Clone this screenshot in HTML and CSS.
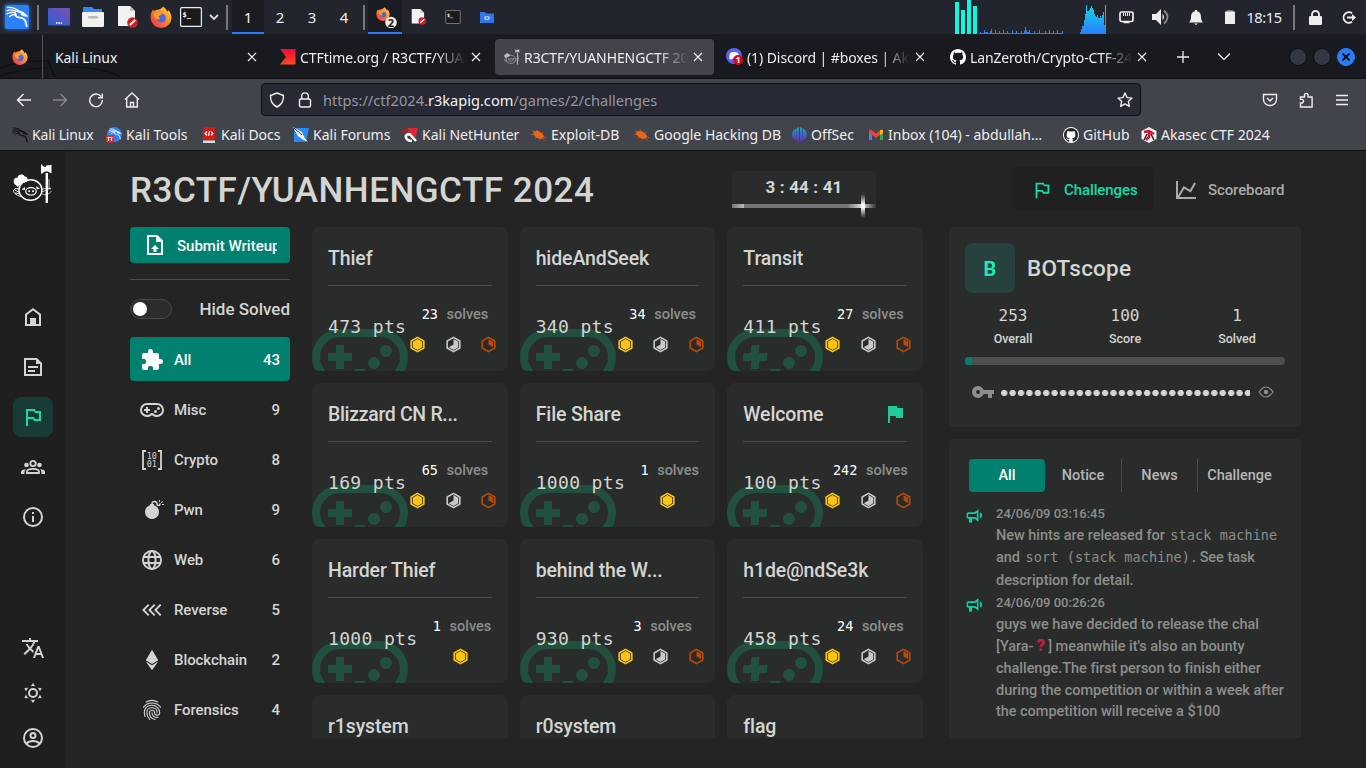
FILE: index.html
```html
<!DOCTYPE html>
<html lang="en">
<head>
<meta charset="utf-8">
<title>R3CTF/YUANHENGCTF 2024</title>
<link rel="stylesheet" href="styles.css">
</head>
<body>
<svg class="defs" width="0" height="0">
  <defs>
    <linearGradient id="foxg" x1="1" y1="0" x2="0" y2="1"><stop offset="0" stop-color="#ffe14a"/><stop offset=".45" stop-color="#ff8a26"/><stop offset="1" stop-color="#f0245c"/></linearGradient>
    <linearGradient id="bluev" x1="0" y1="0" x2="0" y2="1"><stop offset="0" stop-color="#10d8e4"/><stop offset="1" stop-color="#2a7dff"/></linearGradient>
    <linearGradient id="desk" x1="0" y1="1" x2="1" y2="0"><stop offset="0" stop-color="#2d5fd8"/><stop offset="1" stop-color="#7a4fb0"/></linearGradient>
    <linearGradient id="offs" x1="0" y1="0" x2="0" y2="1"><stop offset="0" stop-color="#14a8c0"/><stop offset="1" stop-color="#6a26d0"/></linearGradient>
    <linearGradient id="flagr" x1="0" y1="0" x2="0" y2="1"><stop offset="0" stop-color="#f4083c"/><stop offset="1" stop-color="#ff4a1c"/></linearGradient>
  </defs>
  <symbol id="fox" viewBox="0 0 22 22"><path fill="url(#foxg)" d="M13 0.500c3 2 3.500 3.500 4 5 1-.3 1.200-1 1.200-1.500 2 2 3.300 4.800 3.300 7.700A10.400 10.400 0 0 1 11 22 10.400 10.400 0 0 1 .6 11.500C.6 8 1.500 5.500 3.400 3.200c0 1 .3 1.700.6 2C5.200 4 6.500 3.800 7.500 3.800c2-.2 4.600-1.200 5.500-3.300z"/><circle cx="11.300" cy="12" r="4.600" fill="#4f66e0"/><path fill="#ffa52a" d="M4 8c2-1.600 6-1.500 8 0-1 1.400-3 1-3.600 2.600L10 13c-3 1-6-1-6-5z"/></symbol>
  <symbol id="dragon" viewBox="0 0 24 24"><g fill="none" stroke="currentColor" stroke-linecap="round"><path stroke-width="1.500" d="M2 1.500c6 0 10 1.500 13 5M1 5c4-1.500 7-1 11 .8M1 8.500c3-1.500 6-2 9-1.500M4 11.500c2-2 4-2.500 7-2.500"/><path stroke-width="2" d="M10 8c-1 4 4 4.500 7 5s5 4 5.500 9"/><path stroke-width="2.200" d="M13 6c4 0 6 1.500 9 4.500-2 0-3-.5-5-1.500"/></g></symbol>
  <symbol id="nodoc" viewBox="0 0 22 22"><path fill="#f2f2f2" d="M1 0h12l5 5v15H1z"/><path fill="#c4c4c4" d="M13 0l5 5h-5z"/><circle cx="15.500" cy="16.500" r="5.300" fill="#d01f26"/><path stroke="#fff" stroke-width="1.800" d="M12.800 19l5.400-5"/></symbol>
  <symbol id="term" viewBox="0 0 22 20"><rect x=".6" y=".6" width="20.800" height="18.800" rx="1" fill="#1b1b1b" stroke="currentColor" stroke-width="1.200"/><text x="2.500" y="9.500" font-size="7" font-weight="700" fill="#fff" font-family="DejaVu Sans Mono, monospace">$_</text></symbol>
  <symbol id="github" viewBox="0 0 16 16"><path fill="currentColor" d="M8 0C3.580 0 0 3.580 0 8c0 3.540 2.290 6.530 5.470 7.590.4.070.55-.17.55-.38 0-.19-.01-.82-.01-1.490-2.010.37-2.530-.49-2.690-.94-.09-.23-.48-.94-.82-1.130-.28-.15-.68-.52-.01-.53.63-.01 1.080.58 1.230.82.72 1.210 1.870.87 2.330.66.07-.52.28-.87.51-1.070-1.780-.2-3.640-.89-3.640-3.950 0-.87.31-1.590.82-2.150-.08-.2-.36-1.020.08-2.120 0 0 .67-.21 2.200.82.64-.18 1.320-.27 2-.27s1.360.09 2 .27c1.530-1.040 2.200-.82 2.200-.82.44 1.100.16 1.920.08 2.120.51.56.82 1.270.82 2.150 0 3.070-1.870 3.750-3.650 3.950.29.25.54.73.54 1.480 0 1.070-.01 1.930-.01 2.200 0 .21.15.46.55.38A8.010 8.010 0 0 0 16 8c0-4.420-3.580-8-8-8z"/></symbol>
  <symbol id="bug" viewBox="0 0 16 16"><g stroke="#f0641a" stroke-width=".7"><path d="M1 3.500l4 2.500M0 7l5 1M6 2.500l1 3M4 12l3-3M9 13l-1-4M15.500 11l-4-2M12 5l-2 2M14 13.500l-4-4"/></g><ellipse cx="7.500" cy="7.800" rx="5.600" ry="3.300" transform="rotate(28 7.500 7.800)" fill="#f0641a"/></symbol>
  <symbol id="x" viewBox="0 0 10 10"><path d="M1 1l8 8M9 1L1 9" stroke="currentColor" stroke-width="1.200" fill="none"/></symbol>
  <symbol id="pig" viewBox="0 0 40 40"><g fill="none" stroke="currentColor"><ellipse cx="17.500" cy="26" rx="11.500" ry="10.300" stroke-width="1.400"/><ellipse cx="18" cy="27.300" rx="5.300" ry="3.700" stroke-width="1.200"/><path stroke-width=".9" d="M6 25c-3-1-5.500 0-5.500 2s4 5 8 5.500M2 26l5 3M2 29l5 1"/><path stroke-width=".9" opacity=".75" d="M28 29c3 3 8 2 10.500-2M28 26c3-2 7-2 10-1M29 28l9-4M36 15v10"/><path stroke-width="2.400" d="M33.800 9v30"/></g><path fill="currentColor" d="M1.500 20c-2-3 0-7 3-6 0-4 6-4.500 7-1.500 3-.5 4 3 2.500 5.500-5 .5-7 2.500-9 5zM28 0l3.500 3h1.500V1.500L38.500 1v8.500L35 7.500h-3L28 10z"/><circle cx="16.200" cy="27.300" r="1" fill="currentColor"/><circle cx="20" cy="27.300" r="1" fill="currentColor"/><path fill="currentColor" d="M8.500 25.500l3.500-2.500v3zM23 22l4 2.500-3 1z"/></symbol>
  <symbol id="pad" viewBox="0 0 24 24"><path fill="currentColor" d="M6,9H8V11H10V13H8V15H6V13H4V11H6V9M18.500,9A1.500,1.500 0 0,1 20,10.500A1.500,1.500 0 0,1 18.500,12A1.500,1.500 0 0,1 17,10.500A1.500,1.500 0 0,1 18.500,9M15.500,12A1.500,1.500 0 0,1 17,13.500A1.500,1.500 0 0,1 15.500,15A1.500,1.500 0 0,1 14,13.500A1.500,1.500 0 0,1 15.500,12M17,5A7,7 0 0,1 24,12A7,7 0 0,1 17,19C15.040,19 13.270,18.200 12,16.900C10.730,18.200 8.960,19 7,19A7,7 0 0,1 0,12A7,7 0 0,1 7,5H17M7,7A5,5 0 0,0 2,12A5,5 0 0,0 7,17C8.640,17 10.090,16.210 11,15H13C13.910,16.210 15.360,17 17,17A5,5 0 0,0 22,12A5,5 0 0,0 17,7H7Z"/></symbol>
  <symbol id="flago" viewBox="0 0 24 24"><path fill="currentColor" d="M14.500,6L14,4H5V21H7V14H12L13,16H20V6H14.500M18,14H14L13,12H7V6H13L14,8H18V14Z"/></symbol>
  <symbol id="horn" viewBox="0 0 24 24"><path fill="currentColor" d="M12,8H4A2,2 0 0,0 2,10V14A2,2 0 0,0 4,16H5V20A1,1 0 0,0 6,21H8A1,1 0 0,0 9,20V16H12L17,20V4L12,8M15,15.600L13,14H4V10H13L15,8.400V15.600M21.500,12C21.500,13.710 20.540,15.260 19,16V8C20.530,8.750 21.500,10.300 21.500,12Z"/></symbol>
  <symbol id="hexo" viewBox="0 0 24 24"><path fill="none" stroke="currentColor" stroke-width="2" stroke-linejoin="round" d="M12 3l8 4.500v9L12 21l-8-4.500v-9z"/></symbol>
  <symbol id="hex6" viewBox="0 0 24 24"><use href="#hexo"/><path fill="currentColor" d="M12 5.200l6 3.400v6.800l-6 3.400-6-3.400V8.600z"/></symbol>
  <symbol id="hex4" viewBox="0 0 24 24"><use href="#hexo"/><path fill="currentColor" d="M12 5.200l6 3.400v6.800l-6 3.400-6-3.400 6-3.400z"/></symbol>
  <symbol id="hex2" viewBox="0 0 24 24"><use href="#hexo"/><path fill="currentColor" d="M12 5.200l6 3.400v6.800l-6-3.400z"/></symbol>
</svg>

<header class="panel">
  <span><svg class="kali" width="26" height="26" viewBox="0 0 26 26"><rect x="1" y="1" width="24" height="24" rx="2" fill="#2a80f5"/><use href="#dragon" x="2" y="2" width="22" height="22" color="#fff"/></svg></span>
  <i class="sep"></i>
  <span><svg width="22" height="18" viewBox="0 0 22 18"><rect width="22" height="17.500" rx="1" fill="url(#desk)"/><path stroke="#fff" stroke-width="1.500" stroke-dasharray="1.500 .8" d="M8 15h6.500"/></svg></span>
  <span><svg width="22" height="20" viewBox="0 0 22 20"><path fill="#3584f0" d="M1 0h9l2 2h8v5H1z"/><rect y="5" width="22" height="15" rx="1" fill="#f1f1f1"/><rect x="6" y="9" width="10" height="2.500" rx="1" fill="#bbb"/></svg></span>
  <span><svg width="22" height="22"><use href="#nodoc"/></svg></span>
  <span><svg width="22" height="22"><use href="#fox"/></svg></span>
  <span><svg width="22" height="20" class="w"><use href="#term"/></svg></span>
  <span><svg width="10" height="6" viewBox="0 0 10 6"><path d="M1 1l4 4 4-4" fill="none" stroke="#ddd" stroke-width="1.800"/></svg></span>
  <i class="sep"></i>
  <span class="ws on">1</span><span class="ws">2</span><span class="ws">3</span><span class="ws">4</span>
  <i class="sep"></i>
  <span class="task on"><svg width="21" height="24" viewBox="0 0 21 24"><use href="#fox" x="0" y="3" width="14" height="14"/><circle cx="15" cy="18.500" r="5.800" fill="#eee"/><text x="15" y="22.500" text-anchor="middle" font-size="11" font-weight="700" fill="#222" font-family="Noto Sans, sans-serif">2</text></svg></span>
  <span><svg width="16" height="16"><use href="#nodoc"/></svg></span>
  <span><svg width="16" height="14" class="g"><use href="#term"/></svg></span>
  <span><svg width="14" height="11" viewBox="0 0 14 11"><path fill="#2f78e8" d="M0 0h5l1 1.500h8V11H0z"/><ellipse cx="7" cy="6" rx="3" ry="2" fill="#a9caff"/><circle cx="7" cy="6" r="1" fill="#2f78e8"/></svg></span>
  <span class="spacer"></span>
  <svg class="graph" width="154" height="34" viewBox="0 0 154 34"><path fill="#06fbe0" d="M2 2h4v32H2zM8 10h4v24H8zM14 0h4v34h-4zM20 6h4v28h-4z"/><path fill="#2a7dff" d="M26 34v-1h1v-1h1v1h3v-3h1v2h3v1h2v-2h1v-2h1v4h3v-3h1v3h3v-2h1v2h3v-3h1v3h3v-2h1v2h4v-3h1v3h3v-2h1v2h4v-2h1v2h2v-2h1v-4h1v3h1v2h2v-2h1v3h4v-2h1v2h4v-3h1v3h5v-2h1v2h3v-3h1v3h3v-2h1v2h3v-3h1v3h4v-2h1v3z"/><path fill="url(#bluev)" d="M127 34v-2h1v-3h1v-3h2v-6h1v-6h1v-9h1v6h2v-1h1v-2h1v-2h1v2h1v2h1v4h1v2h1v1h1v-2h1v3h2v-2h1v2h1v-3h1v-3h1v13h1V5h1v29z"/></svg>
  <span><svg width="15" height="13" viewBox="0 0 15 13"><rect x="1" y="1" width="13" height="9.500" rx="1.500" fill="none" stroke="#eee" stroke-width="1.700"/><path stroke="#eee" d="M4.500 2v3M6.500 2v3M8.500 2v3M10.500 2v3"/><path stroke="#eee" stroke-width="1.500" d="M4.500 11.500h6"/></svg></span>
  <span><svg width="18" height="16" viewBox="0 0 18 16"><path fill="#eee" d="M0 5h4l5-5v16l-5-5H0zM10.500 4.500q3 3.500 0 7z"/><path fill="none" stroke="#888" stroke-width="1.800" d="M12 1.500q7 6.500 0 13"/></svg></span>
  <span><svg width="14" height="15" viewBox="0 0 14 15"><path fill="#eee" d="M7 0c1 0 1.300.7 1.300 1.200C11 2 12 4 12 7c0 3 .8 4 2 5.500H0C1.200 11 2 10 2 7c0-3 1-5 3.700-5.800C5.700.7 6 0 7 0zM5 13.500h4L7 15z"/></svg></span>
  <span><svg width="10" height="14" viewBox="0 0 10 14"><path fill="#777" d="M2 0h6v2H2z"/><path fill="#eee" d="M0 1.500h10V14H0z"/></svg></span>
  <span class="clock">18:15</span>
  <i class="sep"></i>
  <span><svg width="13" height="15" viewBox="0 0 13 15"><rect y="6" width="13" height="9" rx="1" fill="#eee"/><path fill="none" stroke="#eee" stroke-width="1.900" d="M3 7V4.500a3.500 3.500 0 0 1 7 0V7"/></svg></span>
  <span class="out"><svg width="14" height="13" viewBox="0 0 14 13"><path fill="none" stroke="#eee" stroke-width="1.800" d="M10 2.200A5.300 5.300 0 1 0 10 10.800"/><path fill="#eee" d="M5 5.500h5V3l4 3.500L10 10V7.500H5z"/></svg></span>
</header>

<nav class="tabs">
  <svg class="wall" width="125" height="20" viewBox="0 0 125 20"><path fill="none" stroke="#0f1013" stroke-width="1.500" d="M0 10Q20 2 48 3L55 19M0 18Q20 11 48 10M70 9Q95 8 120 18"/></svg>
  <span class="pin"><svg width="16" height="16"><use href="#fox"/></svg></span>
  <div class="tab plain"><b>Kali Linux</b><svg width="10" height="10"><use href="#x"/></svg></div>
  <div class="tab ctf"><svg width="16" height="16" viewBox="0 0 16 16"><path fill="url(#flagr)" d="M0 0h15.500v15.500H0L6 8z"/></svg><b>CTFtime.org / R3CTF/YUAN</b><svg width="10" height="10"><use href="#x"/></svg></div>
  <div class="tab on"><svg width="16" height="16" color="#bbb"><use href="#pig"/></svg><b>R3CTF/YUANHENGCTF 20</b><svg width="10" height="10"><use href="#x"/></svg></div>
  <div class="tab"><svg width="17" height="17" viewBox="0 0 17 17"><circle cx="8" cy="8" r="8" fill="#5865f2"/><path fill="#fff" d="M4 5q4-2 8 0 1.500 3 1 6l-2 .5-1-1H6.500l-1 1-2-.5q-.5-3 .5-6z"/><circle cx="12" cy="12" r="5" fill="#e2001a"/><text x="12" y="15.300" text-anchor="middle" font-size="9" font-weight="700" fill="#fff" font-family="Noto Sans, sans-serif">1</text></svg><b>(1) Discord | #boxes | Akas</b><svg width="10" height="10"><use href="#x"/></svg></div>
  <div class="tab hub"><svg width="16" height="16" color="#fff"><use href="#github"/></svg><b>LanZeroth/Crypto-CTF-24</b><svg width="10" height="10"><use href="#x"/></svg></div>
  <span class="plus"><svg width="12" height="12" viewBox="0 0 12 12"><path stroke="#eee" stroke-width="1.300" d="M6 0v12M0 6h12"/></svg></span>
  <span class="more"><svg width="12" height="7" viewBox="0 0 12 7"><path fill="none" stroke="#eee" stroke-width="1.300" d="M0 .5l6 6 6-6"/></svg></span>
  <span class="wm"><i></i><i></i><i class="close"><svg width="8" height="8" viewBox="0 0 8 8"><path stroke="#111" stroke-width="2" d="M.5.5l7 7M7.500.5l-7 7"/></svg></i></span>
</nav>

<div class="toolbar">
  <span><svg width="16" height="16" viewBox="0 0 16 16"><path d="M15 8H2M7.500 2L1.500 8l6 6"/></svg></span>
  <span class="dim"><svg width="16" height="16" viewBox="0 0 16 16"><path d="M1 8h13M8.500 2l6 6-6 6"/></svg></span>
  <span><svg width="16" height="16" viewBox="0 0 16 16"><path d="M13 4.500A6.300 6.300 0 1 0 14.300 8M14.300 1.500v4.300H10"/></svg></span>
  <span><svg width="16" height="16" viewBox="0 0 16 16"><path d="M1 7.500L8 1l7 6.500M2.700 6.500V15h10.600V6.500M6.500 15v-4.500h3V15"/></svg></span>
  <div class="url">
    <svg width="16" height="16" viewBox="0 0 16 16"><path stroke-linejoin="round" d="M8 1l6.500 2.500c.3 5-1.500 9-6.500 11.500C3 12.500 1.200 8.500 1.500 3.500z"/></svg>
    <svg width="14" height="16" viewBox="0 0 14 16"><rect x="1.500" y="7" width="11" height="8" rx="1.500"/><path d="M3.700 7V4.200a3.300 3.300 0 0 1 6.600 0V7"/></svg>
    <p>https://ctf2024.<em>r3kapig.com</em>/games/2/challenges</p>
    <svg width="16" height="16" viewBox="0 0 16 16"><path stroke-linejoin="round" d="M8 1l2.100 4.600 4.900.5-3.700 3.300 1.100 5L8 11.900l-4.400 2.500 1.100-5L1 6.100l4.900-.5z"/></svg>
  </div>
  <span><svg width="16" height="16" viewBox="0 0 16 16"><path d="M1.500 2.500h13v5a6.500 6 0 0 1-13 0zM5 6l3 3 3-3"/></svg></span>
  <span><svg width="16" height="16" viewBox="0 0 16 16"><path d="M2.500 15v-4h1.200a1.800 1.800 0 0 0 0-3.600H2.500V5h4V3.200a1.800 1.800 0 0 1 3.600 0V5h4v10z"/></svg></span>
  <span><svg width="14" height="12" viewBox="0 0 14 12"><path d="M1 1.500h12M1 6h12M1 10.500h12"/></svg></span>
</div>

<div class="marks">
  <a class="kl"><svg width="16" height="16" color="#111"><use href="#dragon"/></svg>Kali Linux</a>
  <a><svg width="16" height="16" viewBox="0 0 16 16"><circle cx="8.500" cy="7.500" r="7.500" fill="#2f80f0"/><use href="#dragon" x="3" y="1" width="12" height="12" color="#fff"/><rect y="8" width="8" height="7.500" rx="1.500" fill="#e23030"/><path stroke="#fff" d="M2.500 10v4M5.500 10v4M1.500 10.500h5"/></svg>Kali Tools</a>
  <a><svg width="15" height="16" viewBox="0 0 15 16"><path fill="#d41919" d="M1 0h12v13H1z"/><path fill="#ddd" d="M1 13.500h12V16H1z"/><path fill="none" stroke="#fff" stroke-width="1.200" d="M5 4.500L3.200 6.500 5 8.500M9 4.500l1.800 2L9 8.500M7.500 4l-1 5"/></svg>Kali Docs</a>
  <a><svg width="16" height="16" viewBox="0 0 16 16"><path fill="#2b8af8" d="M1 1h15l-3 14H1z"/><path fill="#fff" d="M0 0l9 5 2 5 4 5-6-3-4-3z"/><path stroke="#222" d="M1 1l8 7"/></svg>Kali Forums</a>
  <a><svg width="16" height="16" viewBox="0 0 16 16"><path fill="#e02434" d="M5 1h11l-3 11-4-5z"/><path fill="none" stroke="#fff" stroke-width="2.500" d="M14 14L8.500 8c-2-2-5.500 0-4.500 2.500S7 14 10 14"/><path stroke="#c01622" stroke-width="3" d="M0 5l5-2"/></svg>Kali NetHunter</a>
  <a><svg width="16" height="16"><use href="#bug"/></svg>Exploit-DB</a>
  <a><svg width="16" height="16"><use href="#bug"/></svg>Google Hacking DB</a>
  <a><svg width="15" height="15" viewBox="0 0 15 15"><path fill="url(#offs)" d="M7 0v15L5 14V1zM8 0v15l2-1V1zM4.500 1.200v12.600Q0 11.500 0 7.500t4.500-6.300zM10.500 1.200v12.600Q15 11.500 15 7.500t-4.500-6.300z"/></svg>OffSec</a>
  <a><svg width="16" height="16" viewBox="0 0 16 16"><path fill="#4285f4" d="M1 4h3v9H1z"/><path fill="#34a853" d="M12 4h3v9h-3z"/><path fill="#ea4335" d="M1 3l2-.5 5 4 5-4 2 .5v2.500L8 11 1 5.500z"/><path fill="#fbbc04" d="M12 3.500l2-1 1 1.500v2l-3 2z"/></svg>Inbox (104) - abdullah…</a>
  <a><svg width="16" height="16" viewBox="0 0 16 16"><circle cx="8" cy="8" r="8" fill="#fff"/><use href="#github" x="1" y="1" width="14" height="14" color="#22252b"/></svg>GitHub</a>
  <a><svg width="16" height="16" viewBox="0 0 16 16"><path fill="#f4f4f4" d="M8 0l7.500 4v8L8 16 .5 12V4z"/><path fill="none" stroke="#d8102c" stroke-width="2.500" d="M3 5l5-1 5 3M8 4v6l-3 3"/><path stroke="#222" stroke-width="1.500" d="M3 13l3-6M13 13l-3-6"/></svg>Akasec CTF 2024</a>
</div>

<div class="app">
  <aside class="rail">
    <svg class="logo" width="40" height="40"><use href="#pig"/></svg>
    <div class="group top">
      <i><svg viewBox="0 0 24 24"><path fill="none" stroke="currentColor" stroke-width="2" d="M5 20V9.500L12 4.200 19 9.500V20z"/><path fill="currentColor" d="M9 13h6v8H9z"/></svg></i>
      <i><svg viewBox="0 0 24 24"><path fill="none" stroke="currentColor" stroke-width="2" d="M4 4h11.500L20 8.500V20H4zM7 12h10M7 16h7"/><path fill="currentColor" d="M15 4l5 5h-5z"/></svg></i>
      <i class="on"><svg><use href="#flago"/></svg></i>
      <i><svg viewBox="0 0 24 24"><g fill="none" stroke="currentColor" stroke-width="1.800"><circle cx="12" cy="8.500" r="2.700"/><path d="M6 18v-1.500c0-3.500 12-3.500 12 0V18z"/></g><g fill="currentColor"><circle cx="5.500" cy="10" r="2.300"/><circle cx="18.500" cy="10" r="2.300"/><path d="M0 19v-2c0-1.500 2-2.700 5-3-1.200 1-1.500 2-1.500 5zM24 19v-2c0-1.500-2-2.700-5-3 1.200 1 1.500 2 1.500 5z"/></g></svg></i>
      <i><svg viewBox="0 0 24 24"><circle cx="12" cy="12" r="9" fill="none" stroke="currentColor" stroke-width="2"/><path fill="currentColor" d="M11 7h2v2h-2zM11 11h2v6h-2z"/></svg></i>
    </div>
    <div class="group bottom">
      <i><svg viewBox="0 0 24 24"><path fill="currentColor" d="M12.870,15.070L10.330,12.560L10.360,12.530C12.100,10.590 13.340,8.360 14.070,6H17V4H10V2H8V4H1V6H12.170C11.500,7.920 10.440,9.750 9,11.350C8.070,10.320 7.300,9.190 6.690,8H4.690C5.420,9.630 6.420,11.170 7.670,12.560L2.580,17.580L4,19L9,14L12.110,17.110L12.870,15.070M18.500,10H16.500L12,22H14L15.120,19H19.870L21,22H23L18.500,10M15.880,17L17.500,12.670L19.120,17H15.880Z"/></svg></i>
      <i><svg viewBox="0 0 24 24"><circle cx="12" cy="12" r="4" fill="none" stroke="currentColor" stroke-width="2"/><path fill="currentColor" d="M12,2L14.390,5.420C13,4.900 11,4.900 9.610,5.420L12,2M3.340,7L7.500,6.650C6.300,7.600 5.400,9.200 5.110,10.790L3.340,7M3.360,17L5.120,13.230C5.400,14.900 6.300,16.400 7.500,17.370L3.360,17M20.650,7L18.880,10.790C18.600,9.200 17.700,7.600 16.500,6.640L20.650,7M20.640,17L16.500,17.360C17.700,16.400 18.600,14.800 18.870,13.210L20.640,17M12,22L9.590,18.560C11,19.100 13,19.100 14.370,18.560L12,22Z"/></svg></i>
      <i><svg viewBox="0 0 24 24"><g fill="none" stroke="currentColor" stroke-width="2"><circle cx="12" cy="12" r="9"/><circle cx="12" cy="9.500" r="2.500"/><path d="M5.500 17.500c3-3.300 10-3.300 13 0"/></g></svg></i>
    </div>
  </aside>

  <main class="content">
    <div class="head">
      <h1>R3CTF/YUANHENGCTF 2024</h1>
      <div class="timer"><span>3 : 44 : 41</span><i class="bar"></i><i class="spark"></i></div>
      <div class="views">
        <a class="on"><svg width="22" height="22"><use href="#flago"/></svg>Challenges</a>
        <a><svg width="24" height="24" viewBox="0 0 24 24"><path fill="currentColor" d="M16,11.780L20.240,4.450L21.970,5.450L16.740,14.500L10.230,10.750L5.460,19H22V21H2V3H4V17.540L9.500,8L16,11.780Z"/></svg>Scoreboard</a>
      </div>
    </div>

    <section class="cats">
      <button class="submit"><svg width="24" height="24" viewBox="0 0 24 24"><path fill="none" stroke="#fff" stroke-width="2" d="M5 3h9l5 5v13H5z"/><path fill="#fff" d="M13 3l6 6h-6zM12 12l4 4h-2.500v3h-3v-3H8z"/></svg><span>Submit Writeup</span></button>
      <hr>
      <div class="hide"><i></i><span>Hide Solved</span></div>
      <ul>
        <li class="on"><svg viewBox="0 0 24 24"><path fill="currentColor" d="M20.500,11H19V7C19,5.890 18.100,5 17,5H13V3.500A2.500,2.500 0 0,0 10.500,1A2.500,2.500 0 0,0 8,3.500V5H4A2,2 0 0,0 2,7V10.800H3.500C5,10.800 6.200,12 6.200,13.500C6.200,15 5,16.200 3.500,16.200H2V20A2,2 0 0,0 4,22H7.800V20.500C7.800,19 9,17.800 10.500,17.800C12,17.800 13.200,19 13.200,20.500V22H17A2,2 0 0,0 19,20V16H20.500A2.500,2.500 0 0,0 23,13.500A2.500,2.500 0 0,0 20.500,11Z"/></svg><span>All</span><b>43</b></li>
        <li><svg><use href="#pad"/></svg><span>Misc</span><b>9</b></li>
        <li><svg viewBox="0 0 24 24"><path fill="none" stroke="currentColor" stroke-width="1.800" d="M6 3H3v18h3M18 3h3v18h-3"/><g fill="currentColor" font-size="8.500" font-family="DejaVu Sans Mono, monospace"><text x="6.800" y="11">10</text><text x="6.800" y="19">01</text></g></svg><span>Crypto</span><b>8</b></li>
        <li><svg viewBox="0 0 24 24"><path fill="currentColor" d="M11.250,6A3.250,3.250 0 0,1 14.500,2.750A3.250,3.250 0 0,1 17.750,6C17.750,6.420 18.080,6.750 18.500,6.750C18.920,6.750 19.250,6.420 19.250,6V5.250H20.750V6A2.250,2.250 0 0,1 18.500,8.250A2.250,2.250 0 0,1 16.250,6A1.750,1.750 0 0,0 14.500,4.250A1.750,1.750 0 0,0 12.750,6H14V7.290C16.890,8.150 19,10.830 19,14A7,7 0 0,1 12,21A7,7 0 0,1 5,14C5,10.830 7.110,8.150 10,7.290V6H11.250M22,6H24V7H22V6M19,4V2H20V4H19M20.910,4.380L22.330,2.960L23.040,3.670L21.620,5.090L20.910,4.380Z"/></svg><span>Pwn</span><b>9</b></li>
        <li><svg viewBox="0 0 24 24"><g fill="none" stroke="currentColor" stroke-width="2"><circle cx="12" cy="12" r="9"/><ellipse cx="12" cy="12" rx="3.600" ry="9"/><path d="M3.800 9h16.400M3.800 15h16.400"/></g></svg><span>Web</span><b>6</b></li>
        <li><svg viewBox="0 0 24 24"><path fill="none" stroke="currentColor" stroke-width="1.900" d="M8.700 6.700L3.400 12l5.300 5.300M14.700 6.700L9.400 12l5.300 5.300M20.700 6.700L15.400 12l5.300 5.300"/></svg><span>Reverse</span><b>5</b></li>
        <li><svg viewBox="0 0 24 24"><path fill="currentColor" d="M12,1.750L5.750,12.250L12,16L18.250,12.250L12,1.750M5.750,13.500L12,22.250L18.250,13.500L12,17.250L5.750,13.500Z"/></svg><span>Blockchain</span><b>2</b></li>
        <li><svg viewBox="0 0 24 24"><path fill="none" stroke="currentColor" stroke-width="1.100" stroke-linecap="round" d="M6.200 4c3.600-2 8-2 11.600 0M3.500 9.200c4.200-5.600 12.800-5.600 17 0M5 18.500c-2-6 .5-11.200 7-11.200 4.500 0 7.700 3.500 7.700 7.400 0 3.200-5.100 3.200-5.100 0 0-3.300-5.200-3.300-5.200 0 0 3.400 2.300 6 5.600 6.800M9.700 21.300c-2-2-2.900-4-2.900-6.600 0-6.600 10.400-6.600 10.400 0M12 14.700c0 3.300 2.600 5.200 6 4.600"/></svg><span>Forensics</span><b>4</b></li>
      </ul>
    </section>

    <section class="cards">
      <article><h2>Thief</h2><svg class="bgi"><use href="#pad"/></svg><p>473 pts</p><div class="s"><span><b>23</b> solves</span><div><svg class="h6"><use href="#hex6"/></svg><svg class="h4"><use href="#hex4"/></svg><svg class="h2"><use href="#hex2"/></svg></div></div></article>
      <article><h2>hideAndSeek</h2><svg class="bgi"><use href="#pad"/></svg><p>340 pts</p><div class="s"><span><b>34</b> solves</span><div><svg class="h6"><use href="#hex6"/></svg><svg class="h4"><use href="#hex4"/></svg><svg class="h2"><use href="#hex2"/></svg></div></div></article>
      <article><h2>Transit</h2><svg class="bgi"><use href="#pad"/></svg><p>411 pts</p><div class="s"><span><b>27</b> solves</span><div><svg class="h6"><use href="#hex6"/></svg><svg class="h4"><use href="#hex4"/></svg><svg class="h2"><use href="#hex2"/></svg></div></div></article>
      <article><h2 class="narrow">Blizzard CN R...</h2><svg class="bgi"><use href="#pad"/></svg><p>169 pts</p><div class="s"><span><b>65</b> solves</span><div><svg class="h6"><use href="#hex6"/></svg><svg class="h4"><use href="#hex4"/></svg><svg class="h2"><use href="#hex2"/></svg></div></div></article>
      <article><h2>File Share</h2><svg class="bgi"><use href="#pad"/></svg><p>1000 pts</p><div class="s one"><span><b>1</b> solves</span><div><svg class="h6"><use href="#hex6"/></svg></div></div></article>
      <article><h2>Welcome<svg class="solved" width="24" height="24" viewBox="0 0 24 24"><path fill="#22c99a" d="M14.400,6L14,4H5V21H7V14H12.600L13,16H20V6H14.400Z"/></svg></h2><svg class="bgi"><use href="#pad"/></svg><p>100 pts</p><div class="s"><span><b>242</b> solves</span><div><svg class="h6"><use href="#hex6"/></svg><svg class="h4"><use href="#hex4"/></svg><svg class="h2"><use href="#hex2"/></svg></div></div></article>
      <article><h2>Harder Thief</h2><svg class="bgi"><use href="#pad"/></svg><p>1000 pts</p><div class="s one"><span><b>1</b> solves</span><div><svg class="h6"><use href="#hex6"/></svg></div></div></article>
      <article><h2>behind the W...</h2><svg class="bgi"><use href="#pad"/></svg><p>930 pts</p><div class="s"><span><b>3</b> solves</span><div><svg class="h6"><use href="#hex6"/></svg><svg class="h4"><use href="#hex4"/></svg><svg class="h2"><use href="#hex2"/></svg></div></div></article>
      <article><h2>h1de@ndSe3k</h2><svg class="bgi"><use href="#pad"/></svg><p>458 pts</p><div class="s"><span><b>24</b> solves</span><div><svg class="h6"><use href="#hex6"/></svg><svg class="h4"><use href="#hex4"/></svg><svg class="h2"><use href="#hex2"/></svg></div></div></article>
      <article><h2>r1system</h2></article>
      <article><h2>r0system</h2></article>
      <article><h2>flag</h2></article>
    </section>

    <section class="side">
      <div class="team">
        <div class="who"><i>B</i><span>BOTscope</span></div>
        <div class="stats"><div><b>253</b>Overall</div><div><b>100</b>Score</div><div><b>1</b>Solved</div></div>
        <div class="prog"><i></i></div>
        <div class="token"><svg width="24" height="24" viewBox="0 0 24 24"><path fill="currentColor" d="M7,14A2,2 0 0,1 5,12A2,2 0 0,1 7,10A2,2 0 0,1 9,12A2,2 0 0,1 7,14M12.650,10C11.830,7.670 9.610,6 7,6A6,6 0 0,0 1,12A6,6 0 0,0 7,18C9.610,18 11.830,16.330 12.650,14H17V18H21V14H23V10H12.650Z"/></svg><i></i><svg width="16" height="12" viewBox="0 0 16 12"><path fill="none" stroke="currentColor" stroke-width="1.200" d="M1 6q7-10 14 0-7 10-14 0z"/><circle cx="8" cy="6" r="2.200" fill="currentColor"/></svg></div>
      </div>
      <div class="news">
        <div class="seg"><a class="on">All</a><a>Notice</a><a class="l">News</a><a class="l">Challenge</a></div>
        <div class="note"><svg width="19" height="19"><use href="#horn"/></svg><div><time>24/06/09 03:16:45</time><p>New hints are released for <code>stack machine</code><br>and <code>sort (stack machine)</code>. See task<br>description for detail.</p></div></div>
        <div class="note second"><svg width="19" height="19"><use href="#horn"/></svg><div><time>24/06/09 00:26:26</time><p>guys we have decided to release the chal<br>[Yara-<em>?</em>] meanwhile it's also an bounty<br>challenge.The first person to finish either<br>during the competition or within a week after<br>the competition will receive a $100</p></div></div>
      </div>
    </section>
  </main>
</div>
</body>
</html>
```
FILE: styles.css
```css
* { box-sizing: border-box; }
body { margin: 0; width: 1366px; height: 768px; overflow: hidden; background: #242424; font-family: "Noto Sans", sans-serif; color: #eee; }
svg { display: block; flex: none; }
i, em { font-style: normal; }
h1, h2, p, ul { margin: 0; padding: 0; }
.defs { position: absolute; }

/* desktop panel */
.panel { height: 35px; background: #23252e; border-bottom: 1px solid #1b1c22; display: grid; align-items: center;
  grid-template-columns: 34px 7px 35px 34px 36px 30px 30px 16px 10px 32px 32px 32px 32px 8px 34px 34px 34px 34px 449px 154px 38px 32px 38px 30px 38px 21px 22px 40px; }
.panel > span { display: flex; justify-content: center; align-items: center; height: 34px; }
.panel .sep { width: 2px; height: 25px; background: #77787c; justify-self: center; }
.kali { filter: drop-shadow(0 0 2px #2a80f5); }
.w { color: #eee; }
.g { color: #888; }
.ws { font-size: 15px; }
.panel .on { background: #1b1c22; border-bottom: 2px solid #2a7dff; }
.panel .ws.on { padding-top: 2px; }
.panel .task { padding-left: 3px; }
.panel .out { padding-left: 6px; }
.clock { font-size: 14.500px; letter-spacing: -.4px; }

/* browser tabs */
.tabs { position: relative; height: 44px; background: #191a1f; border-bottom: 1px solid #0f1013; display: flex; align-items: center; font-size: 14px; }
.wall { position: absolute; left: 0; bottom: 0; }
.pin { width: 43px; height: 44px; padding: 14px 0 0 12px; border-right: 1px solid #55565b; position: relative; }
.tab { width: 219px; margin-right: 3px; height: 36px; border-radius: 4px; display: flex; align-items: center; padding: 0 11px 0 9px; gap: 4px; }
.tab.plain { width: 225px; padding-left: 12px; margin-right: 5px; }
.tab.ctf { padding-left: 7px; }
.tab.hub { padding-left: 11px; }
.tab b { font-weight: 400; flex: 1; white-space: nowrap; overflow: hidden; letter-spacing: -.08px; padding-top: 1px; margin-right: 1px; -webkit-mask: linear-gradient(90deg, #000 82%, transparent 100%); mask: linear-gradient(90deg, #000 82%, transparent 100%); }
.tab.hub b { letter-spacing: -.15px; }
.tab.plain b { -webkit-mask: none; mask: none; }
.tab.on { background: #42444c; }
.plus { width: 44px; display: flex; justify-content: center; }
.more { width: 38px; display: flex; justify-content: center; }
.wm { display: flex; gap: 6px; margin-left: 46px; }
.wm i { width: 18px; height: 18px; border-radius: 50%; background: #333845; border: 1px solid #0c0d10; display: flex; align-items: center; justify-content: center; }
.wm .close { background: #2a7dff; border-color: #2a7dff; }

/* navigation toolbar */
.toolbar { height: 41px; background: #42444c; display: grid; align-items: center; grid-template-columns: 36px 36px 36px 35px 1103px 36px 36px 36px; padding-left: 6px; }
.toolbar svg { fill: none; stroke: #eee; stroke-width: 1.400; }
.toolbar > span { display: flex; justify-content: center; }
.toolbar .dim { opacity: .4; }
.url { width: 880px; height: 33px; margin-left: 112px; border: 1px solid #0f1015; border-radius: 4px; background: #272935; display: flex; align-items: center; padding: 0 7px; font-size: 14.600px; color: #96979e; }
.url svg + svg { margin-left: 13px; }
.url p { flex: 1; margin-left: 11px; }
.url em { color: #f2f2f2; }

.marks { height: 31px; background: #42444c; border-bottom: 1px solid #101114; display: grid; grid-template-columns: 94px 96px 91px 109px 129px 103px 158px 76px 195px 78px 200px; padding-left: 12px; font-size: 14px; }
.marks a { display: flex; align-items: center; gap: 4px; white-space: nowrap; height: 29px; }
.marks .kl { letter-spacing: -.15px; }

/* application */
.app { height: 617px; display: flex; font-family: Roboto, sans-serif; color: #d3d5d3; background: #242424; font-weight: 500; }
.rail { width: 65px; background: #1f1f1f; display: flex; flex-direction: column; align-items: center; }
.logo { margin-top: 13px; color: #fff; }
.rail i { width: 40px; height: 40px; border-radius: 8px; display: flex; align-items: center; justify-content: center; }
.rail i svg { width: 24px; height: 24px; }
.rail i.on { background: #193b36; color: #12dca8; }
.group { display: flex; flex-direction: column; gap: 10px; }
.top { margin-top: 93px; }
.bottom { margin-top: 91px; gap: 5px; }

.content { width: 1171px; margin-left: 65px; display: grid; grid-template-columns: 182px 637px 352px; grid-template-rows: 76px 511px; }
.head { grid-column: 1 / 4; display: flex; }
h1 { font-size: 35px; font-weight: 500; line-height: 76px; width: 602px; letter-spacing: .5px; white-space: nowrap; padding-top: 2px; height: 76px; }
.timer { position: relative; width: 144px; height: 37px; margin-top: 20px; background: #2a2c2b; border-radius: 4px 4px 0 0; text-align: center; font-size: 17px; font-weight: 700; line-height: 33px; letter-spacing: .15px; }
.timer .bar { position: absolute; left: 0; bottom: 0; width: 144px; height: 4px; background: linear-gradient(90deg, #777 0, #bbb 12px, #747474 12px, #747474 115px, #ddd 130px, #333 144px); }
.timer .spark { position: absolute; left: 129px; top: 23px; width: 4px; height: 24px; background: linear-gradient(#fff0, #fff 45%, #fff 55%, #fff0); }
.views { margin-left: 138px; display: flex; padding-top: 16px; }
.views a { height: 44px; border-radius: 4px; display: flex; align-items: center; padding: 1px 16px 0 17px; gap: 11px; font-size: 15px; letter-spacing: -.1px; color: #a9aba9; width: 139px; }
.views .on { color: #12dca8; background: #202020; }
.views a + a { margin-left: 5px; padding-left: 16px; gap: 10px; }

.cats { width: 160px; }
.submit { width: 160px; height: 36px; border: 0; border-radius: 4px; background: #00806f; color: #fff; font: 500 15px Roboto, sans-serif; display: flex; align-items: center; padding: 0 13px; gap: 10px; }
.submit span { overflow: hidden; white-space: nowrap; padding-top: 2px; }
hr { border: 0; height: 1px; background: #4a4b4a; margin: 16px 0 0; }
.hide { height: 57px; display: flex; justify-content: space-between; align-items: center; font-size: 17px; padding-top: 1px; }
.hide i { width: 42px; height: 20px; border: 1px solid #474847; border-radius: 10px; background: #2b2d2c; padding: 2px; }
.hide i::before { content: ""; display: block; width: 14px; height: 14px; border-radius: 50%; background: #fff; }
.cats ul { list-style: none; display: flex; flex-direction: column; gap: 6px; }
.cats li { height: 44px; border-radius: 4px; display: flex; align-items: center; padding: 1px 10px 0 10px; font-size: 15px; letter-spacing: -.08px; }
.cats li svg { width: 24px; height: 24px; }
.cats li span { margin-left: 10px; flex: 1; }
.cats li b { font-weight: 500; }
.cats li.on { background: #00806f; color: #fff; }

.cards { width: 611px; height: 511px; overflow: hidden; display: grid; grid-template-columns: repeat(3, 1fr); gap: 12px; grid-auto-rows: 144px; align-content: start; }
article { position: relative; background: #2a2c2b; border-radius: 8px; overflow: hidden; padding: 0 16px; }
h2 { position: relative; height: 59px; border-bottom: 1px solid #4a4b4a; font-size: 19.500px; line-height: 64px; font-weight: 500; letter-spacing: -.12px; white-space: nowrap; }
.narrow { letter-spacing: -.33px; }
.solved { position: absolute; right: 0; top: 19px; }
.bgi { position: absolute; left: 0; top: 82px; width: 96px; height: 96px; color: #21503f; }
article p { position: absolute; left: 16px; top: 88px; font: 400 18px/24px "DejaVu Sans Mono", monospace; letter-spacing: .35px; white-space: pre; }
.s { position: absolute; left: 98px; top: 78px; width: 86px; text-align: center; font-size: 14.500px; color: #8c8e8c; line-height: 19px; white-space: nowrap; }
.s span { display: block; margin: 0 -4px 0 0; }
.s b { font: 500 13.500px "DejaVu Sans Mono", monospace; color: #fff; margin-right: 5px; }
.s div { display: flex; justify-content: space-between; margin: 11px -2px 0; }
.s.one { left: 105px; }
.s.one div { justify-content: center; }
.s svg { width: 19px; height: 19px; }
.h6 { color: #fcc419; }
.h4 { color: #c9c9c9; }
.h2 { color: #b8490c; }

.side { display: flex; flex-direction: column; gap: 12px; }
.team, .news { background: #2a2c2b; border-radius: 4px; }
.team { height: 200px; padding: 16px; }
.who { display: flex; align-items: center; gap: 12px; font-size: 22.500px; letter-spacing: .2px; }
.who i { width: 50px; height: 50px; border-radius: 8px; background: #27423e; color: #20e8b4; font-size: 20px; font-weight: 700; display: flex; align-items: center; justify-content: center; padding-top: 2px; }
.stats { display: grid; grid-template-columns: 96px 96px 96px; column-gap: 16px; margin-top: 12px; height: 52px; text-align: center; font-size: 12.500px; line-height: 15px; }
.stats b { display: block; font: 400 16px/22px "DejaVu Sans Mono", monospace; margin-bottom: 4px; }
.prog { height: 8px; border-radius: 4px; background: #4d4e4d; overflow: hidden; }
.prog i { display: block; width: 7px; height: 8px; background: #00806f; }
.token { display: flex; align-items: center; margin: 15px 0 0 6px; color: #8c8e8c; }
.token i { width: 249px; height: 8px; margin: 2px 8px 0 6px; background: radial-gradient(circle at 3.200px 4px, #d3d5d3 2.800px, transparent 3.500px) 0 0 / 8.420px 8px; }
.news { height: 299px; padding: 20px 16px 0; }
.seg { display: grid; grid-template-columns: 76px 76px 76px 84px; margin: 0 4px 12px; height: 32px; line-height: 33px; text-align: center; font-size: 14.500px; color: #b5b7b5; }
.seg .on { background: #00806f; border-radius: 4px; color: #fff; }
.seg .l { border-left: 1px solid #4a4b4a; }
.note { display: flex; color: #8c8e8c; font-size: 14.500px; line-height: 22.400px; white-space: nowrap; letter-spacing: -.04px; }
.note.second { line-height: 21.800px; }
.note > svg { color: #12cfa0; margin: 3px 12px 0 0; }
.note time { display: block; font-size: 13px; line-height: 22px; letter-spacing: 0; }
.note code { font: 400 13.500px/1 "DejaVu Sans Mono", monospace; padding: 0 2px; letter-spacing: .1px; }
.note em { color: #c81e3c; font-weight: 900; font-size: 17px; line-height: 1; padding: 0 3px; }
```
